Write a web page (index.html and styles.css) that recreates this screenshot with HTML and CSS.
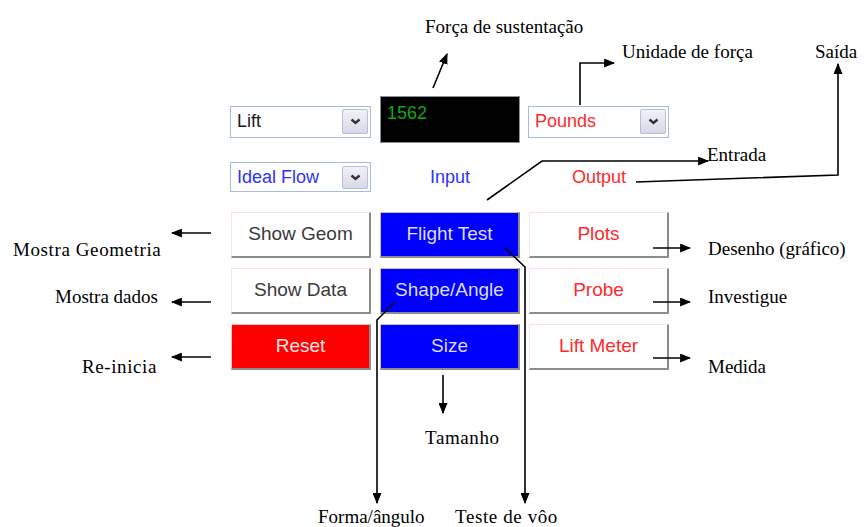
FILE: index.html
```html
<!DOCTYPE html>
<html lang="pt">
<head>
  <meta charset="UTF-8">
  <meta name="viewport" content="width=device-width, initial-scale=1.0">
  <title>FoilSim - Painel de controle</title>
  <link rel="stylesheet" href="styles.css">
</head>
<body>
  <div class="figure">
    <div class="panel">
      <div class="row row-top">
        <div class="select">
          <span class="select-text">Lift</span>
          <span class="select-btn"><svg width="11" height="7" viewBox="0 0 11 7"><path d="M1.5 1.5 L5.5 5 L9.5 1.5" fill="none" stroke="#333" stroke-width="2.4"/></svg></span>
        </div>
        <div class="readout">1562</div>
        <div class="select text-red">
          <span class="select-text">Pounds</span>
          <span class="select-btn"><svg width="11" height="7" viewBox="0 0 11 7"><path d="M1.5 1.5 L5.5 5 L9.5 1.5" fill="none" stroke="#333" stroke-width="2.4"/></svg></span>
        </div>
      </div>

      <div class="row row-mid">
        <div class="select select-short text-blue">
          <span class="select-text">Ideal Flow</span>
          <span class="select-btn"><svg width="11" height="7" viewBox="0 0 11 7"><path d="M1.5 1.5 L5.5 5 L9.5 1.5" fill="none" stroke="#333" stroke-width="2.4"/></svg></span>
        </div>
        <div class="caption text-blue">Input</div>
        <div class="caption text-red">Output</div>
      </div>

      <div class="buttons">
        <div class="btn">Show Geom</div>
        <div class="btn btn-blue">Flight Test</div>
        <div class="btn btn-out">Plots</div>
        <div class="btn">Show Data</div>
        <div class="btn btn-blue">Shape/Angle</div>
        <div class="btn btn-out">Probe</div>
        <div class="btn btn-red">Reset</div>
        <div class="btn btn-blue">Size</div>
        <div class="btn btn-out">Lift Meter</div>
      </div>
    </div>

    <svg class="notes" width="864" height="527" viewBox="0 0 864 527">
      <defs>
        <marker id="head" viewBox="0 0 10 10" refX="9" refY="5" markerWidth="11" markerHeight="9" orient="auto" markerUnits="userSpaceOnUse" preserveAspectRatio="none">
          <path d="M0 0 L10 5 L0 10 z" fill="#000"/>
        </marker>
      </defs>
      <g class="lines">
        <line x1="433" y1="88" x2="447" y2="54"/>
        <polyline points="580,105 580,63 614,63"/>
        <polyline points="636,182 838,175 838,64"/>
        <polyline points="487,200 542,161 708,161"/>
        <line x1="211" y1="233" x2="172" y2="233"/>
        <line x1="211" y1="302" x2="172" y2="302"/>
        <line x1="211" y1="357" x2="172" y2="357"/>
        <line x1="653" y1="248" x2="690" y2="248"/>
        <line x1="653" y1="302" x2="690" y2="302"/>
        <line x1="653" y1="358" x2="690" y2="358"/>
        <line x1="443" y1="375" x2="443" y2="413"/>
        <polyline points="395,302 377,320 377,503"/>
        <polyline points="505,248 525,267 525,503"/>
      </g>
      <g class="note">
        <text x="425" y="33">Força de sustentação</text>
        <text x="622" y="58">Unidade de força</text>
        <text x="815" y="58">Saída</text>
        <text x="707" y="161">Entrada</text>
        <text x="13" y="256" class="wide">Mostra Geometria</text>
        <text x="55" y="303">Mostra dados</text>
        <text x="82" y="373" class="wide">Re-inicia</text>
        <text x="708" y="255">Desenho (gráfico)</text>
        <text x="708" y="303">Investigue</text>
        <text x="708" y="373">Medida</text>
        <text x="425" y="444" class="wide">Tamanho</text>
        <text x="318" y="523">Forma/ângulo</text>
        <text x="455" y="523" class="wide">Teste de vôo</text>
      </g>
    </svg>
  </div>
</body>
</html>
```

FILE: styles.css
```css
body {
  margin: 0;
  background: #fff;
  font-family: "Liberation Sans", Arial, sans-serif;
}
.figure {
  position: relative;
  width: 864px;
  height: 527px;
  overflow: hidden;
  background: #fff;
}
.panel {
  width: 438px;
  margin-left: 231px;
  padding-top: 96px;
}
.row {
  display: grid;
  grid-template-columns: 140px 140px 140px;
  column-gap: 9px;
  align-items: center;
}
.row-top {
  height: 47px;
}
.row-top .select {
  margin-top: 4px;
}
.row-mid {
  height: 32px;
  margin-top: 18px;
}
.select {
  height: 32px;
  box-sizing: border-box;
  border: 1px solid #a7bcd8;
  background: #fff;
  display: flex;
  align-items: center;
  justify-content: space-between;
  font-size: 18px;
  color: #1a1a1a;
  margin-left: -1px;
}
.select-short {
  height: 30px;
}
.select-text {
  padding-left: 6px;
}
.select-btn {
  width: 26px;
  height: calc(100% - 5px);
  margin-right: 2px;
  box-sizing: border-box;
  border: 1px solid #b9bdd6;
  border-radius: 2px;
  background: linear-gradient(#f1f1f8, #d9d9e8);
  display: flex;
  align-items: center;
  justify-content: center;
}
.readout {
  height: 47px;
  box-sizing: border-box;
  background: #000;
  border: 1px solid #8a8f99;
  color: #11a811;
  font-size: 18px;
  padding: 6px 0 0 6px;
}
.caption {
  text-align: center;
  font-size: 18px;
}
.text-blue {
  color: #3030ff;
}
.text-red {
  color: #ff2a2a;
}
.buttons {
  display: grid;
  grid-template-columns: 140px 140px 140px;
  grid-auto-rows: 46px;
  column-gap: 9px;
  row-gap: 10px;
  margin-top: 19px;
}
.btn {
  box-sizing: border-box;
  display: flex;
  align-items: center;
  justify-content: center;
  font-size: 19px;
  background: #fff;
  color: #3a3a3a;
  border-top: 1px solid #fbe3e3;
  border-left: 1px solid #fbe3e3;
  border-right: 2px solid #8c8c8c;
  border-bottom: 2px solid #8c8c8c;
  padding-bottom: 2px;
}
.btn-out {
  color: #ff2a2a;
}
.btn-blue {
  background: #0000ff;
  color: #dcdcff;
  border-top-color: #c9c2b4;
  border-left-color: #c9c2b4;
}
.btn-red {
  background: #ff0000;
  color: #ffe6e6;
  border-top-color: #e8c8c0;
  border-left-color: #e8c8c0;
}
.notes {
  position: absolute;
  left: 0;
  top: 0;
  pointer-events: none;
}
.lines line,
.lines polyline {
  fill: none;
  stroke: #000;
  stroke-width: 1.6;
  marker-end: url(#head);
}
.note text {
  font-family: "Liberation Serif", "Times New Roman", serif;
  font-size: 19px;
  fill: #000;
}
.note .wide {
  letter-spacing: 0.6px;
}
```
